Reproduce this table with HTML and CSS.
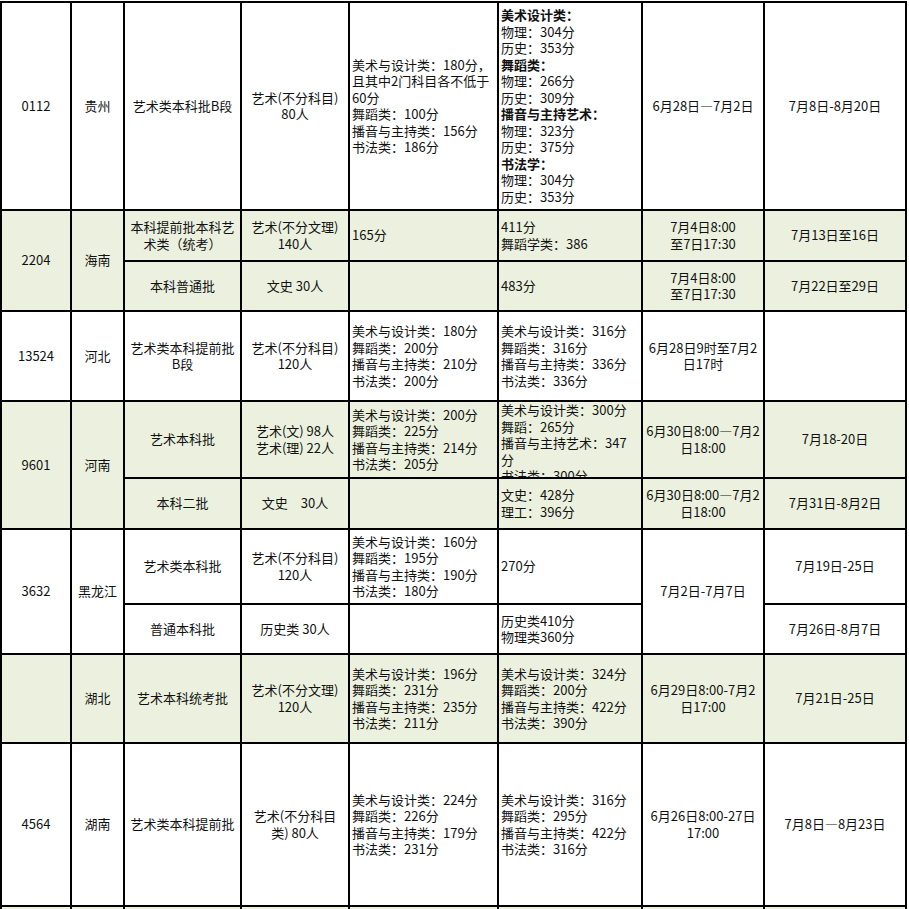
FILE: index.html
```html
<!DOCTYPE html>
<html lang="zh-CN">
<head>
<meta charset="utf-8">
<title>艺术类招生计划</title>
<link rel="stylesheet" href="styles.css">
</head>
<body>
<div class="sheet">
  <!-- 贵州 -->
  <div class="c"><span>0112</span></div>
  <div class="c"><span>贵州</span></div>
  <div class="c"><span>艺术类本科批B段</span></div>
  <div class="c"><span>艺术(不分科目)<br>80人</span></div>
  <div class="l"><span>美术与设计类：180分，<br>且其中2门科目各不低于<br>60分<br>舞蹈类：100分<br>播音与主持类：156分<br>书法类：186分</span></div>
  <div class="l"><span><b>美术设计类：</b><br>物理：304分<br>历史：353分<br><b>舞蹈类：</b><br>物理：266分<br>历史：309分<br><b>播音与主持艺术：</b><br>物理：323分<br>历史：375分<br><b>书法学：</b><br>物理：304分<br>历史：353分</span></div>
  <div class="c"><span>6月28日—7月2日</span></div>
  <div class="c"><span>7月8日-8月20日</span></div>

  <!-- 海南 -->
  <div class="c g span2"><span>2204</span></div>
  <div class="c g span2"><span>海南</span></div>
  <div class="c g"><span>本科提前批本科艺<br>术类（统考）</span></div>
  <div class="c g"><span>艺术(不分文理)<br>140人</span></div>
  <div class="l g"><span>165分</span></div>
  <div class="l g"><span>411分<br>舞蹈学类：386</span></div>
  <div class="c g"><span>7月4日8:00<br>至7日17:30</span></div>
  <div class="c g"><span>7月13日至16日</span></div>
  <div class="c g"><span>本科普通批</span></div>
  <div class="c g"><span>文史 30人</span></div>
  <div class="l g"></div>
  <div class="l g"><span>483分</span></div>
  <div class="c g"><span>7月4日8:00<br>至7日17:30</span></div>
  <div class="c g"><span>7月22日至29日</span></div>

  <!-- 河北 -->
  <div class="c"><span>13524</span></div>
  <div class="c"><span>河北</span></div>
  <div class="c"><span>艺术类本科提前批<br>B段</span></div>
  <div class="c"><span>艺术(不分科目)<br>120人</span></div>
  <div class="l"><span>美术与设计类：180分<br>舞蹈类：200分<br>播音与主持类：210分<br>书法类：200分</span></div>
  <div class="l"><span>美术与设计类：316分<br>舞蹈类：316分<br>播音与主持类：336分<br>书法类：336分</span></div>
  <div class="c"><span>6月28日9时至7月2<br>日17时</span></div>
  <div class="c"></div>

  <!-- 河南 -->
  <div class="c g span2"><span>9601</span></div>
  <div class="c g span2"><span>河南</span></div>
  <div class="c g"><span>艺术本科批</span></div>
  <div class="c g"><span>艺术(文) 98人<br>艺术(理) 22人</span></div>
  <div class="l g"><span>美术与设计类：200分<br>舞蹈类：225分<br>播音与主持类：214分<br>书法类：205分</span></div>
  <div class="l g top"><span>美术与设计类：300分<br>舞蹈：265分<br>播音与主持艺术：347<br>分<br>书法类：300分</span></div>
  <div class="c g"><span>6月30日8:00—7月2<br>日18:00</span></div>
  <div class="c g"><span>7月18-20日</span></div>
  <div class="c g"><span>本科二批</span></div>
  <div class="c g"><span>文史　30人</span></div>
  <div class="l g"></div>
  <div class="l g"><span>文史：428分<br>理工：396分</span></div>
  <div class="c g"><span>6月30日8:00—7月2<br>日18:00</span></div>
  <div class="c g"><span>7月31日-8月2日</span></div>

  <!-- 黑龙江 -->
  <div class="c span2"><span>3632</span></div>
  <div class="c span2"><span>黑龙江</span></div>
  <div class="c"><span>艺术类本科批</span></div>
  <div class="c"><span>艺术(不分科目)<br>120人</span></div>
  <div class="l"><span>美术与设计类：160分<br>舞蹈类：195分<br>播音与主持类：190分<br>书法类：180分</span></div>
  <div class="l"><span>270分</span></div>
  <div class="c span2"><span>7月2日-7月7日</span></div>
  <div class="c"><span>7月19日-25日</span></div>
  <div class="c"><span>普通本科批</span></div>
  <div class="c"><span>历史类 30人</span></div>
  <div class="l"></div>
  <div class="l"><span>历史类410分<br>物理类360分</span></div>
  <div class="c"><span>7月26日-8月7日</span></div>

  <!-- 湖北 -->
  <div class="c g"></div>
  <div class="c g"><span>湖北</span></div>
  <div class="c g"><span>艺术本科统考批</span></div>
  <div class="c g"><span>艺术(不分文理)<br>120人</span></div>
  <div class="l g"><span>美术与设计类：196分<br>舞蹈类：231分<br>播音与主持类：235分<br>书法类：211分</span></div>
  <div class="l g"><span>美术与设计类：324分<br>舞蹈类：200分<br>播音与主持类：422分<br>书法类：390分</span></div>
  <div class="c g"><span>6月29日8:00-7月2<br>日17:00</span></div>
  <div class="c g"><span>7月21日-25日</span></div>

  <!-- 湖南 -->
  <div class="c"><span>4564</span></div>
  <div class="c"><span>湖南</span></div>
  <div class="c"><span>艺术类本科提前批</span></div>
  <div class="c"><span>艺术(不分科目<br>类) 80人</span></div>
  <div class="l"><span>美术与设计类：224分<br>舞蹈类：226分<br>播音与主持类：179分<br>书法类：231分</span></div>
  <div class="l"><span>美术与设计类：316分<br>舞蹈类：295分<br>播音与主持类：422分<br>书法类：316分</span></div>
  <div class="c"><span>6月26日8:00-27日<br>17:00</span></div>
  <div class="c"><span>7月8日—8月23日</span></div>

  <!-- next row (cut off) -->
  <div class="c g"></div>
  <div class="c g"></div>
  <div class="c g"></div>
  <div class="c g"></div>
  <div class="l g"></div>
  <div class="l g"></div>
  <div class="c g"></div>
  <div class="c g"></div>
</div>
</body>
</html>
```

FILE: styles.css
```css
html, body {
  margin: 0;
  padding: 0;
  height: 909px;
  overflow: hidden;
  background: #fff;
}

.sheet {
  display: grid;
  margin-top: 1px;
  width: 907px;
  background: #000;
  gap: 2px;
  padding: 2px 2px 0 2px;
  box-sizing: border-box;
  grid-template-columns: 68px 51px 115px 106px 147px 142px 120px 140px;
  grid-template-rows: 206px 49px 48px 88px 75px 49px 73px 48px 87px 161px 20px;
  font-family: "Noto Sans CJK SC", "Noto Sans", sans-serif;
  font-size: 13px;
  line-height: 16.5px;
  color: #111;
}

.c,
.l {
  display: flex;
  align-items: center;
  background: #fff;
  overflow: hidden;
  white-space: nowrap;
}

.c {
  justify-content: center;
  text-align: center;
}

.l {
  justify-content: flex-start;
  text-align: left;
  padding-left: 2px;
}

.c span,
.l span {
  display: block;
}

.g {
  background: #ebf1de;
}

.span2 {
  grid-row: span 2;
}

.top {
  align-items: flex-start;
}

b {
  font-weight: 700;
}
```
